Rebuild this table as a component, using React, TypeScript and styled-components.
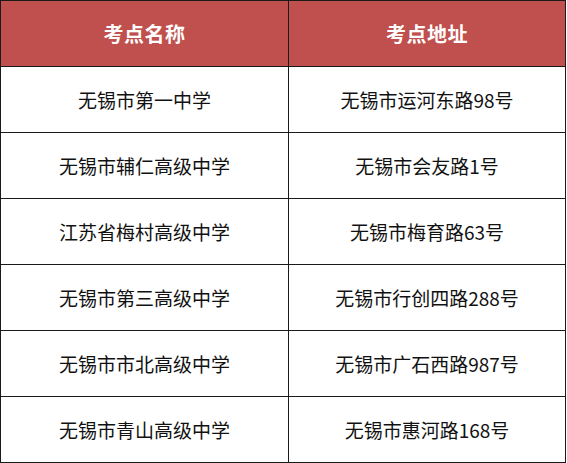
import styled, { createGlobalStyle } from "styled-components";

const GlobalStyle = createGlobalStyle`
  html, body {
    margin: 0;
    padding: 0;
    background: #ffffff;
  }
  body {
    font-family: "Noto Sans CJK SC", "Noto Sans", sans-serif;
  }
`;

const rows: [string, string][] = [
  ["无锡市第一中学", "无锡市运河东路98号"],
  ["无锡市辅仁高级中学", "无锡市会友路1号"],
  ["江苏省梅村高级中学", "无锡市梅育路63号"],
  ["无锡市第三高级中学", "无锡市行创四路288号"],
  ["无锡市市北高级中学", "无锡市广石西路987号"],
  ["无锡市青山高级中学", "无锡市惠河路168号"],
];

const App = () => {
  return (
    <>
      <GlobalStyle />
      <Table>
        <colgroup>
          <col style={{ width: 288 }} />
          <col />
        </colgroup>
        <thead>
          <tr>
            <HeadCell>考点名称</HeadCell>
            <HeadCell>考点地址</HeadCell>
          </tr>
        </thead>
        <tbody>
          {rows.map(([name, addr]) => (
            <tr key={name}>
              <Cell>{name}</Cell>
              <Cell>{addr}</Cell>
            </tr>
          ))}
        </tbody>
      </Table>
    </>
  );
};

export default App;

const Table = styled.table`
  width: 566px;
  border-collapse: collapse;
  table-layout: fixed;
`;

const HeadCell = styled.th`
  height: 65px;
  padding: 0;
  background-color: #c0504d;
  color: #ffffff;
  font-size: 20px;
  font-weight: 700;
  text-align: center;
  border: 1px solid #1a1a1a;
  letter-spacing: 0.5px;
`;

const Cell = styled.td`
  height: 65px;
  padding: 0;
  color: #111111;
  font-size: 19px;
  text-align: center;
  border: 1px solid #1a1a1a;
`;
